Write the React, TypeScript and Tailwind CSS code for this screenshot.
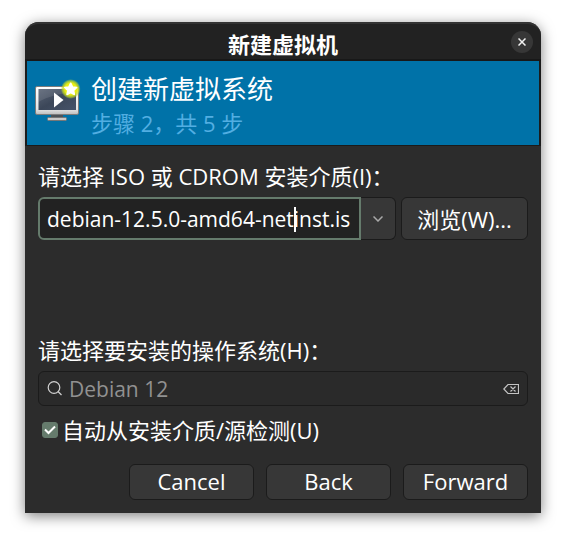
import { useState } from "react";
import type { ReactNode } from "react";

function MonitorIcon() {
  return (
    <svg className="h-12 w-12 shrink-0" viewBox="0 0 48 48" aria-hidden="true">
      <defs>
        <linearGradient id="frame" x1="0" y1="0" x2="0" y2="1">
          <stop offset="0" stopColor="#ffffff" />
          <stop offset="0.8" stopColor="#e6e6e6" />
          <stop offset="1" stopColor="#bdbdbd" />
        </linearGradient>
        <linearGradient id="screen" x1="0" y1="0" x2="1" y2="1">
          <stop offset="0" stopColor="#5a6475" />
          <stop offset="0.5" stopColor="#3c4759" />
          <stop offset="1" stopColor="#46536a" />
        </linearGradient>
        <radialGradient id="glow">
          <stop offset="0" stopColor="#f8fa10" />
          <stop offset="0.6" stopColor="#e6ec10" />
          <stop offset="0.82" stopColor="#c3da28" stopOpacity="0.7" />
          <stop offset="1" stopColor="#9cc840" stopOpacity="0" />
        </radialGradient>
      </defs>
      <path d="M18 35h12v4H18z" fill="#4d5358" />
      <rect x="14.5" y="38.5" width="19" height="3" rx="1" fill="#c9c9c9" stroke="#777" />
      <rect x="2.5" y="7.5" width="43" height="28" rx="1.5" fill="url(#frame)" stroke="#7c7c7c" />
      <rect x="5.5" y="10" width="37.500" height="21" fill="url(#screen)" />
      <path d="M5.500 10H43v3C28 14 13 18 5.500 23z" fill="#fff" opacity="0.1" />
      <path d="M21 13.5v15l9.5-7.5z" fill="#fff" />
      <circle cx="37.7" cy="10" r="10" fill="url(#glow)" />
      <path d="M37.7 4.2l1.8 3.7 4.2.6-3.1 2.9.8 4.1-3.7-2-3.7 2 .8-4.1-3.1-2.900 4.2-.6z" fill="#fff" stroke="#fff" strokeWidth="1.500" strokeLinejoin="round" />
    </svg>
  );
}

function DialogButton({ children, className }: { children: ReactNode; className: string }) {
  return (
    <button
      type="button"
      className={`flex items-center justify-center rounded-md border border-[#1b1b1b] bg-[#373737] ${className}`}
    >
      {children}
    </button>
  );
}

export default function App() {
  const [media, setMedia] = useState("debian-12.5.0-amd64-netinst.is");
  const [detect, setDetect] = useState(true);

  return (
    <div className="min-h-screen bg-white px-[25px] pt-[22px] pb-7 font-['Open_Sans','Noto_Sans_CJK_SC',sans-serif] text-[22px] leading-8 text-white">
      <main className="rounded-t-[14px] bg-[#2c2c2c] shadow-[0_3px_14px_rgba(0,0,0,0.5)]">
        <header className="grid h-[39px] grid-cols-[1fr_auto_1fr] items-center rounded-t-[14px] border-t-2 border-b-2 border-t-[#333333] border-b-[#181818] bg-[#222222] px-2">
          <h1 className="col-start-2 pt-1 text-[22px] leading-7 font-bold">新建虚拟机</h1>
          <button
            type="button"
            aria-label="关闭"
            className="flex size-[22px] items-center justify-center justify-self-end rounded-full bg-[#373737]"
          >
            <svg className="size-2" viewBox="0 0 8 8" fill="none" stroke="#f2f2f2" strokeWidth="1.5">
              <path d="M.5.5l7 7M7.5.5l-7 7" />
            </svg>
          </button>
        </header>

        <section className="flex h-[85px] items-center gap-2 border-x-2 border-b border-[#1b1b1b] bg-[#0072a8] pl-1.5">
          <MonitorIcon />
          <div className="flex flex-col pt-1 pl-0.5">
            <h2 className="text-[26px] leading-9">创建新虚拟系统</h2>
            <p className="text-[#52aee2]">步骤 2，共 5 步</p>
          </div>
        </section>

        <form className="flex flex-col px-[13px] pt-3.5 pb-[13px]" onSubmit={(e) => e.preventDefault()}>
          <label htmlFor="media" className="pb-[5px]">
            请选择 ISO 或 CDROM 安装介质(I)：
          </label>
          <div className="flex h-[43px] gap-[5px]">
            <div className="flex min-w-0 flex-1">
              <div className="relative min-w-0 flex-1">
                <input
                  id="media"
                  value={media}
                  onChange={(e) => setMedia(e.target.value)}
                  className="h-full w-full rounded-l-md border-2 border-[#657b6c] bg-[#222222] px-[7px] text-[21px] outline-none"
                />
                <span className="absolute top-2.5 left-64 h-[25px] w-0.5 bg-white" />
              </div>
              <button
                type="button"
                aria-label="选择介质"
                className="flex w-[35px] items-center justify-center rounded-r-md border border-l-0 border-[#1b1b1b] bg-[#373737]"
              >
                <svg className="h-1.5 w-2.5" viewBox="0 0 10 6" fill="none" stroke="#a9a9a9" strokeWidth="1.5">
                  <path d="M.5.5L5 5 9.5.5" />
                </svg>
              </button>
            </div>
            <DialogButton className="w-[127px]">浏览(W)...</DialogButton>
          </div>

          <label htmlFor="os" className="pt-[94px] pb-[5px]">
            请选择要安装的操作系统(H)：
          </label>
          <div className="flex h-[35px] items-center rounded-md border border-[#1b1b1b] bg-[#2a2a2a] px-2">
            <svg className="size-4 shrink-0" viewBox="0 0 16 16" fill="none" stroke="#d0d0d0" strokeWidth="1.2">
              <circle cx="7" cy="6.5" r="5.8" />
              <path d="M11 10.5l3.5 3.5" />
            </svg>
            <input
              id="os"
              placeholder="Debian 12"
              className="h-full min-w-0 flex-1 bg-transparent px-1.5 text-[21px] outline-none placeholder:text-[#919191]"
            />
            <button type="button" aria-label="清除">
              <svg className="size-4" viewBox="0 0 16 16" fill="none" stroke="#c4c4c4" strokeWidth="1.2">
                <path d="M5 3.5h10.5v9H5L.8 8zM7.5 5.5l5 5M12.5 5.5l-5 5" />
              </svg>
            </button>
          </div>

          <div className="flex items-center gap-1 pt-2 pl-1">
            <span className="relative flex size-4">
              <input
                id="detect"
                type="checkbox"
                checked={detect}
                onChange={(e) => setDetect(e.target.checked)}
                className="size-4 appearance-none rounded-[3px] border border-[#657b6c] bg-[#2a2a2a] checked:bg-[#657b6c]"
              />
              {detect && (
                <svg className="pointer-events-none absolute inset-0 size-4" viewBox="0 0 16 16" fill="none" stroke="#fff" strokeWidth="2">
                  <path d="M3 7.5l3.5 3.5 6.5-6.5" />
                </svg>
              )}
            </span>
            <label htmlFor="detect">自动从安装介质/源检测(U)</label>
          </div>

          <div className="flex justify-end gap-3 pt-[18px]">
            <DialogButton className="h-9 w-[125px] pb-0.5">Cancel</DialogButton>
            <DialogButton className="h-9 w-[125px] pb-0.5">Back</DialogButton>
            <DialogButton className="h-9 w-[125px] pb-0.5">Forward</DialogButton>
          </div>
        </form>
      </main>
    </div>
  );
}
